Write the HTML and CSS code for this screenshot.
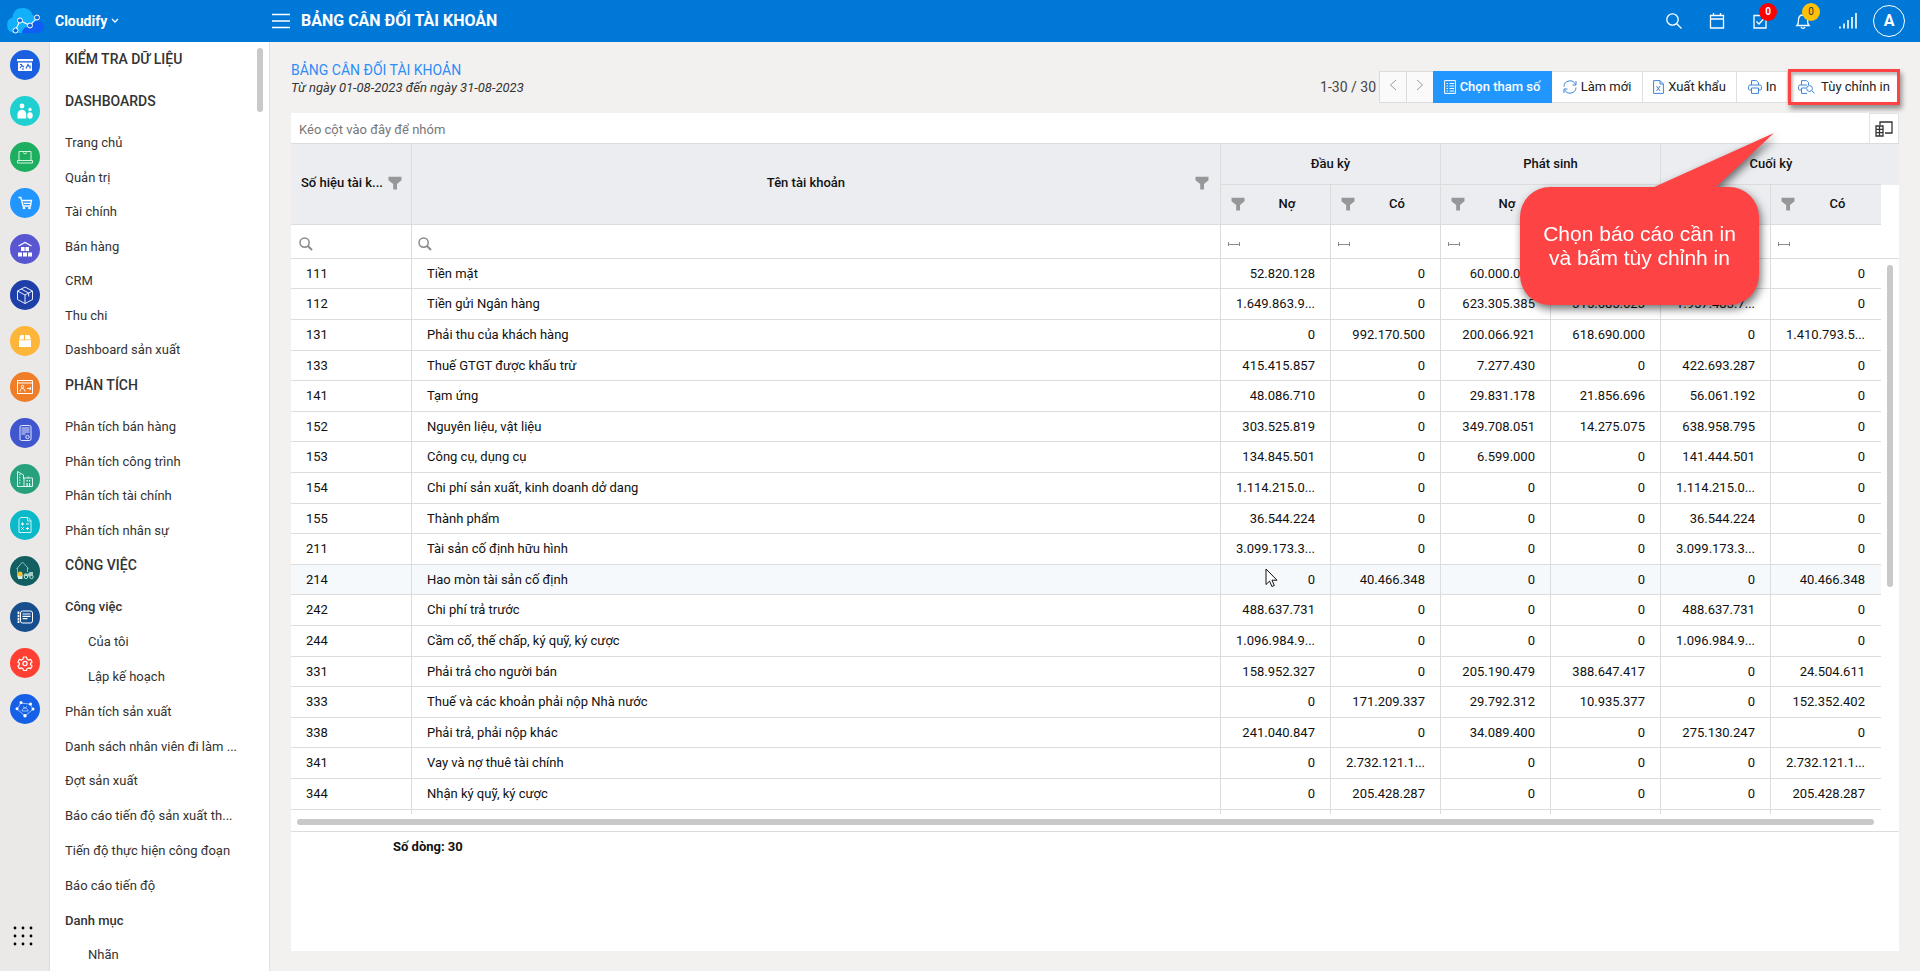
FILE: index.html
```html
<!DOCTYPE html>
<html lang="vi">
<head>
<meta charset="utf-8">
<title>Bảng cân đối tài khoản</title>
<link rel="stylesheet" href="styles.css">
</head>
<body>
<svg class="defs" aria-hidden="true">
  <symbol id="funnel" viewBox="0 0 14 14"><path d="M0.500.8h13v3.400L9 8v5.500H5.200V8L.5 4.200z" fill="currentColor"/></symbol>
  <symbol id="lens" viewBox="0 0 14 14"><circle cx="5.600" cy="5.600" r="4.600" fill="none" stroke="currentColor" stroke-width="1.500"/><path d="M9 9l4 4" stroke="currentColor" stroke-width="2"/></symbol>
  <symbol id="between" viewBox="0 0 14 14"><path d="M1.500 5v4M12.500 5v4M1.500 7.500h11" fill="none" stroke="currentColor" stroke-width="1"/></symbol>
</svg>

<header class="topbar">
  <div class="brand">
    <svg class="logo" width="38" height="28" viewBox="0 0 38 28" aria-hidden="true">
      <path d="M8 26a8 8 0 0 1-1.500-15.500C7 4 11 1 16.500 1c5 0 9 2.500 10 7 3 .5 4.500 3 4.500 6V26z" fill="#12b0fb"/>
      <path d="M16 26c0-3 2-6 6-6 3-1 4-6 9-6 4 0 7 3 7 6s-3 6-7 6z" fill="#0f5df5"/>
      <path d="M9.500 23.500l4.500-10 10 5 7-8" fill="none" stroke="#fff" stroke-width="1.100"/>
      <g fill="#1763d8" stroke="#fff" stroke-width="1"><circle cx="9.500" cy="23.500" r="2.500"/><circle cx="14" cy="13.500" r="2.500"/><circle cx="24" cy="18.500" r="2.500"/><circle cx="31" cy="10.500" r="2.500"/></g>
    </svg>
    <button class="brand-menu" type="button">Cloudify
      <svg width="8" height="6" viewBox="0 0 8 6" aria-hidden="true"><path d="M1 1l3 3 3-3" fill="none" stroke="#fff" stroke-width="1.300"/></svg>
    </button>
  </div>
  <button class="plain" type="button" aria-label="Menu"><svg width="18" height="16" viewBox="0 0 18 16"><path d="M0 1.500h18M0 8h18M0 14.500h18" stroke="#fff" stroke-width="1.400"/></svg></button>
  <h1>BẢNG CÂN ĐỐI TÀI KHOẢN</h1>
  <nav class="actions" aria-label="Công cụ">
    <button class="plain" type="button" aria-label="Tìm kiếm"><svg width="18" height="18" viewBox="0 0 18 18"><circle cx="7.500" cy="7.500" r="5.700"/><path d="M11.700 11.700L16.500 16.500"/></svg></button>
    <button class="plain" type="button" aria-label="Lịch"><svg width="18" height="18" viewBox="0 0 18 18"><path d="M2.500 3.500h13v12.500h-13zM2.500 7h13M5.500 1v3M12.500 1v3"/></svg></button>
    <button class="plain" type="button" aria-label="Công việc"><svg width="18" height="18" viewBox="0 0 18 18"><path d="M3 3.500h12v12.500H3zM5.500 9.500l2.500 2.500 5-5.500"/></svg><span class="badge red">0</span></button>
    <button class="plain" type="button" aria-label="Thông báo"><svg width="18" height="18" viewBox="0 0 18 18"><path d="M3 13.500c1.500-1.500 1.500-3 1.500-5.500 0-3 1.800-5 4.500-5s4.500 2 4.500 5c0 2.500 0 4 1.500 5.500zM7 15c.8 1.700 3.200 1.700 4 0"/></svg><span class="badge amber">0</span></button>
    <button class="plain signal" type="button" aria-label="Tín hiệu"><svg width="20" height="18" viewBox="0 0 20 18"><path d="M2 16.500v-2M6 16.500v-5M10 16.500V8M14 16.500V5M18 16.500V1" stroke-width="1.600"/></svg></button>
    <button class="avatar" type="button">A</button>
  </nav>
</header>

<div class="shell">
  <nav class="rail" aria-label="Phân hệ">
    <a href="#" aria-label="Dashboard"><svg viewBox="0 0 30 30"><circle cx="15" cy="15" r="15" fill="#1a5fe0"/><path d="M7 9h16v2.200H7z" fill="#fff"/><path d="M8 12.500h14V21H8z" fill="#fff"/><path d="M10 18l2-2.500 2 1.500M16 18.500l2-4 1 2M10 14.500h2M20 18.500v-3M12 19h2" fill="none" stroke="#1a5fe0" stroke-width="1.200"/></svg></a>
    <a href="#" aria-label="Nhân sự"><svg viewBox="0 0 30 30"><circle cx="15" cy="15" r="15" fill="#1fd0d0"/><g fill="#fff"><circle cx="12" cy="10" r="2.400"/><path d="M7.500 22.500V18a4.300 4.300 0 0 1 8.700 0v4.500z"/><circle cx="20" cy="13.500" r="1.700"/><ellipse cx="20" cy="19.500" rx="2.700" ry="3.200"/></g></svg></a>
    <a href="#" aria-label="Thiết bị"><svg viewBox="0 0 30 30"><circle cx="15" cy="15" r="15" fill="#1eae60"/><path d="M9 18.500V9.500h12v9M7.500 18.500h15v2.500h-15zM13 10.500l2 1.500 2-1.500" fill="none" stroke="#d4f3e0"/></svg></a>
    <a href="#" aria-label="Bán hàng"><svg viewBox="0 0 30 30"><circle cx="15" cy="15" r="15" fill="#2196ff"/><path d="M8.500 9.500h2.300L13 18h7.500l1-5.500H12M13.500 15.300h7.500" fill="none" stroke="#fff" stroke-width="1.300"/><circle cx="14" cy="20" r="1.300" fill="#fff"/><circle cx="19.500" cy="20" r="1.300" fill="#fff"/></svg></a>
    <a href="#" aria-label="Kho"><svg viewBox="0 0 30 30"><circle cx="15" cy="15" r="15" fill="#5856d0"/><path d="M8.500 12L15 8.500l6.500 3.500" fill="none" stroke="#fff" stroke-width="1.300"/><path d="M11 13h3.600v4H11zM15.400 13H19v4h-3.600zM8 18.500h4v4H8zM13 18.500h4v4h-4zM18 18.500h4v4h-4z" fill="#fff"/></svg></a>
    <a href="#" aria-label="Sản phẩm"><svg viewBox="0 0 30 30"><circle cx="15" cy="15" r="15" fill="#1f3fa8"/><path d="M7.500 11L15 7l7.500 4v8.500L15 23.500l-7.500-4zM7.500 11l7.500 4 7.500-4M15 15v8.500M11.200 9l7.500 4v3.500" fill="none" stroke="#e6ecff"/></svg></a>
    <a href="#" aria-label="Đóng gói"><svg viewBox="0 0 30 30"><circle cx="15" cy="15" r="15" fill="#fdb53a"/><path d="M9 13.500L10.500 9H14v4.500zM21 13.500L19.500 9H15v4.500zM9 14.300h12V21H9z" fill="#fff"/></svg></a>
    <a href="#" aria-label="Khách hàng"><svg viewBox="0 0 30 30"><circle cx="15" cy="15" r="15" fill="#f07d28"/><path d="M7.500 8.500h15v13h-15zM7.500 11h15M10 19.500c0-4 5-4 5 0M17 16.500h4M19.500 15l1.700 1.500-1.700 1.500" fill="none" stroke="#fff"/><circle cx="12.500" cy="14.500" r="1.200" fill="none" stroke="#fff"/></svg></a>
    <a href="#" aria-label="Hợp đồng"><svg viewBox="0 0 30 30"><circle cx="15" cy="15" r="15" fill="#3f56cf"/><rect x="10" y="7.500" width="11" height="15" rx="1.500" fill="none" stroke="#dfe5ff"/><path d="M11.500 10h8M11.500 12h8M11.500 14h8M11.500 16h4" stroke="#dfe5ff"/><circle cx="17.500" cy="19" r="1.700" fill="none" stroke="#dfe5ff"/></svg></a>
    <a href="#" aria-label="Công trình"><svg viewBox="0 0 30 30"><circle cx="15" cy="15" r="15" fill="#27a07d"/><path d="M14 22.500H7.500v-15l6 3.500v4M14 14h8.500v8.500H14zM18.300 14v-1.500" fill="none" stroke="#d9f5ec"/><path d="M9.800 10v11" stroke="#d9f5ec" stroke-dasharray="1.500 1.200"/><path d="M16.500 16h1.200v1.500h-1.200zM19 16h1.200v1.500H19zM16.500 19h1.200v3h-1.200zM19 19h1.200v3H19z" fill="#fff"/></svg></a>
    <a href="#" aria-label="Kế toán"><svg viewBox="0 0 30 30"><circle cx="15" cy="15" r="15" fill="#0cb9c8"/><path d="M10.500 7.500H18l3 3v12H9v-13zM17.500 7.500V11H21" fill="none" stroke="#c8f6fa"/><path d="M11 14h3M12.500 12.500v3M16 14h3M11.300 17.300l2.400 2.400M13.700 17.300l-2.400 2.400M16 18.500h3M17.500 17v3" stroke="#fff"/></svg></a>
    <a href="#" aria-label="Tài sản"><svg viewBox="0 0 30 30"><circle cx="15" cy="15" r="15" fill="#115f61"/><path d="M6.500 13L12.500 6l6 6.500M7.500 12v9h3M17.500 11.500V16" fill="none" stroke="#7cc4bf"/><path d="M13.500 19.500l1-2h4l1-1.500h3.500v4.500h-9.500z" fill="#a7c9c7"/><circle cx="16" cy="21" r="1.700" fill="#115f61" stroke="#cfe" stroke-width=".8"/><circle cx="21.500" cy="21" r="1.700" fill="#115f61" stroke="#cfe" stroke-width=".8"/><path d="M8 18h4.500v5H8z" fill="#dceeee"/><circle cx="10.200" cy="18" r="2.400" fill="#f8bd24"/></svg></a>
    <a href="#" aria-label="Tin tức"><svg viewBox="0 0 30 30"><circle cx="15" cy="15" r="15" fill="#174f8e"/><rect x="10.500" y="9" width="12" height="12" rx="2" fill="none" stroke="#fff"/><path d="M12.500 12h8M12.500 14.300h8M12.500 16.600h5" stroke="#fff" stroke-width="1.200"/><path d="M8.500 9.500v11.500" stroke="#fff" stroke-width="1.800" stroke-dasharray="2.500 .7"/></svg></a>
    <a href="#" aria-label="Cài đặt"><svg viewBox="0 0 30 30"><circle cx="15" cy="15" r="15" fill="#ff3f32"/><path d="M13.500 9h3l.5 2.200 1.500.9 2.100-.7 1.500 2.600-1.600 1.500v1l1.600 1.500-1.500 2.600-2.100-.7-1.500.9-.5 1.700h-3l-.5-1.700-1.500-.9-2.100.7L7.900 18l1.600-1.500v-1L7.900 14l1.500-2.600 2.100.7 1.500-.9z" fill="none" stroke="#fff" stroke-width="1.200" stroke-linejoin="round"/><circle cx="15" cy="15.500" r="2.100" fill="none" stroke="#fff" stroke-width="1.200"/></svg></a>
    <a href="#" aria-label="Kết nối"><svg viewBox="0 0 30 30"><circle cx="15" cy="15" r="15" fill="#1560e6"/><path d="M11 9l9 1.200 3 5L15 22l-8-7zM12 17c0-4 6-4 6 0zM13 12.500l2 1.500 2-1.500" fill="none" stroke="#a9c8ff" stroke-width=".9"/><g fill="#fff"><circle cx="11" cy="8.500" r="1.500"/><circle cx="20.500" cy="10" r="1.600"/><circle cx="7" cy="14.700" r="1.500"/><circle cx="23" cy="15" r="1.500"/><circle cx="15" cy="21.800" r="1.700"/></g></svg></a>
    <button class="apps plain" type="button" aria-label="Ứng dụng"><svg width="20" height="20" viewBox="0 0 20 20"><g fill="#000"><circle cx="2" cy="2" r="1.400"/><circle cx="10" cy="2" r="1.400"/><circle cx="18" cy="2" r="1.400"/><circle cx="2" cy="10" r="1.400"/><circle cx="10" cy="10" r="1.400"/><circle cx="18" cy="10" r="1.400"/><circle cx="2" cy="18" r="1.400"/><circle cx="10" cy="18" r="1.400"/><circle cx="18" cy="18" r="1.400"/></g></svg></button>
  </nav>

  <aside class="sidebar">
    <h2>KIỂM TRA DỮ LIỆU</h2>
    <h2>DASHBOARDS</h2>
    <ul>
      <li><a href="#">Trang chủ</a></li>
      <li><a href="#">Quản trị</a></li>
      <li><a href="#">Tài chính</a></li>
      <li><a href="#">Bán hàng</a></li>
      <li><a href="#">CRM</a></li>
      <li><a href="#">Thu chi</a></li>
      <li><a href="#">Dashboard sản xuất</a></li>
    </ul>
    <h2>PHÂN TÍCH</h2>
    <ul>
      <li><a href="#">Phân tích bán hàng</a></li>
      <li><a href="#">Phân tích công trình</a></li>
      <li><a href="#">Phân tích tài chính</a></li>
      <li><a href="#">Phân tích nhân sự</a></li>
    </ul>
    <h2>CÔNG VIỆC</h2>
    <ul class="tasks">
      <li class="parent"><a href="#">Công việc</a></li>
      <li class="child"><a href="#">Của tôi</a></li>
      <li class="child"><a href="#">Lập kế hoạch</a></li>
      <li><a href="#">Phân tích sản xuất</a></li>
      <li><a href="#">Danh sách nhân viên đi làm ...</a></li>
      <li><a href="#">Đợt sản xuất</a></li>
      <li><a href="#">Báo cáo tiến độ sản xuất th...</a></li>
      <li><a href="#">Tiến độ thực hiện công đoạn</a></li>
      <li><a href="#">Báo cáo tiến độ</a></li>
      <li class="parent"><a href="#">Danh mục</a></li>
      <li class="child"><a href="#">Nhãn</a></li>
    </ul>
    <span class="side-thumb"></span>
  </aside>

  <main>
    <div class="page-head">
      <div>
        <p class="report-title">BẢNG CÂN ĐỐI TÀI KHOẢN</p>
        <p class="report-range">Từ ngày 01-08-2023 đến ngày 31-08-2023</p>
      </div>
      <div class="toolbar">
        <span class="pager">1-30 / 30</span>
        <button class="nav-btn" type="button" aria-label="Trang trước"><svg width="8" height="12" viewBox="0 0 8 12"><path d="M7 1L1.500 6 7 11"/></svg></button>
        <button class="nav-btn" type="button" aria-label="Trang sau"><svg width="8" height="12" viewBox="0 0 8 12"><path d="M1 1l5.500 5L1 11"/></svg></button>
        <button class="btn primary" type="button"><svg width="12" height="14" viewBox="0 0 12 14"><path d="M.6.600h10.800v12.800H.6zM2.500 3.500h1.500M5.500 3.500h4.500M2.500 6h1.500M5.500 6h4.500M2.500 8.500h1.500M5.500 8.500h4.500M2.500 11h1.500M5.500 11h4.500"/></svg>Chọn tham số</button>
        <button class="btn" type="button"><svg width="14" height="14" viewBox="0 0 14 14"><path d="M1 6.500A6 6 0 0 1 12.500 4.500M13 1v4H9.500M13 7.500A6 6 0 0 1 1.500 9.500M1 13V9h3.500"/></svg>Làm mới</button>
        <button class="btn export" type="button"><svg width="11" height="14" viewBox="0 0 11 14"><path d="M.6.600h6.400l3.400 3.400v9.400H.6zM7 .6V4h3.400M3.500 6l3.600 5M7.100 6l-3.600 5"/></svg>Xuất khẩu</button>
        <button class="btn print" type="button"><svg width="14" height="14" viewBox="0 0 14 14"><path d="M3.500 5V.6h5l2 2V5M3.500 10H1.500Q.6 10 .6 9V6.500Q.6 5 2 5h10q1.400 0 1.400 1.500V9q0 1-1 1h-1.900M3.500 8h7v5.400h-7z"/></svg>In</button>
        <button class="btn custom" type="button"><svg width="17" height="14" viewBox="0 0 17 14"><path d="M3.500 5V.6h5l2 2V5M3.500 10H1.500Q.6 10 .6 9V6.500Q.6 5 2 5h7M8 8H3.500v5.400H9"/><circle cx="11.500" cy="8.500" r="2.900"/><path d="M13.700 10.700l2.800 2.700"/></svg>Tùy chỉnh in</button>
      </div>
    </div>

    <section class="panel">
      <div class="group-panel"><span>Kéo cột vào đây để nhóm</span>
        <button class="chooser" type="button" aria-label="Chọn cột"><svg width="18" height="16" viewBox="0 0 18 16"><path d="M5 4V1h12v11h-7M1 5h7v10H1zM1 8.300h7M1 11.700h7M4.500 5v10" fill="none" stroke="#333" stroke-width="1.300"/></svg></button>
      </div>
      <div class="grid">
        <table>
          <colgroup><col class="c-code"><col><col class="c-num"><col class="c-num"><col class="c-num"><col class="c-num"><col class="c-num"><col class="c-num"><col class="c-end"></colgroup>
          <thead>
            <tr class="groups">
              <th rowspan="2"><div class="head-cell"><span>Số hiệu tài k...</span><svg><use href="#funnel"/></svg></div></th>
              <th rowspan="2"><div class="head-cell"><span>Tên tài khoản</span><svg><use href="#funnel"/></svg></div></th>
              <th colspan="2">Đầu kỳ</th><th colspan="2">Phát sinh</th><th colspan="2" class="last">Cuối kỳ</th><th class="last"></th>
            </tr>
            <tr class="subs">
              <th><div class="head-cell num"><svg><use href="#funnel"/></svg><span>Nợ</span></div></th>
              <th><div class="head-cell num"><svg><use href="#funnel"/></svg><span>Có</span></div></th>
              <th><div class="head-cell num"><svg><use href="#funnel"/></svg><span>Nợ</span></div></th>
              <th><div class="head-cell num"><svg><use href="#funnel"/></svg><span>Có</span></div></th>
              <th><div class="head-cell num"><svg><use href="#funnel"/></svg><span>Nợ</span></div></th>
              <th class="last"><div class="head-cell num"><svg><use href="#funnel"/></svg><span>Có</span></div></th>
              <th class="blank"></th>
            </tr>
            <tr class="filters">
              <td><svg><use href="#lens"/></svg></td><td><svg><use href="#lens"/></svg></td>
              <td><svg><use href="#between"/></svg></td><td><svg><use href="#between"/></svg></td><td><svg><use href="#between"/></svg></td><td><svg><use href="#between"/></svg></td><td><svg><use href="#between"/></svg></td><td><svg><use href="#between"/></svg></td><td></td>
            </tr>
          </thead>
          <tbody>
            <tr><td>111</td><td>Tiền mặt</td><td>52.820.128</td><td>0</td><td>60.000.000</td><td>0</td><td>112.820.128</td><td>0</td><td></td></tr>
            <tr><td>112</td><td>Tiền gửi Ngân hàng</td><td>1.649.863.9...</td><td>0</td><td>623.305.385</td><td>315.685.623</td><td>1.957.483.7...</td><td>0</td><td></td></tr>
            <tr><td>131</td><td>Phải thu của khách hàng</td><td>0</td><td>992.170.500</td><td>200.066.921</td><td>618.690.000</td><td>0</td><td>1.410.793.5...</td><td></td></tr>
            <tr><td>133</td><td>Thuế GTGT được khấu trừ</td><td>415.415.857</td><td>0</td><td>7.277.430</td><td>0</td><td>422.693.287</td><td>0</td><td></td></tr>
            <tr><td>141</td><td>Tạm ứng</td><td>48.086.710</td><td>0</td><td>29.831.178</td><td>21.856.696</td><td>56.061.192</td><td>0</td><td></td></tr>
            <tr><td>152</td><td>Nguyên liệu, vật liệu</td><td>303.525.819</td><td>0</td><td>349.708.051</td><td>14.275.075</td><td>638.958.795</td><td>0</td><td></td></tr>
            <tr><td>153</td><td>Công cụ, dụng cụ</td><td>134.845.501</td><td>0</td><td>6.599.000</td><td>0</td><td>141.444.501</td><td>0</td><td></td></tr>
            <tr><td>154</td><td>Chi phí sản xuất, kinh doanh dở dang</td><td>1.114.215.0...</td><td>0</td><td>0</td><td>0</td><td>1.114.215.0...</td><td>0</td><td></td></tr>
            <tr><td>155</td><td>Thành phẩm</td><td>36.544.224</td><td>0</td><td>0</td><td>0</td><td>36.544.224</td><td>0</td><td></td></tr>
            <tr><td>211</td><td>Tài sản cố định hữu hình</td><td>3.099.173.3...</td><td>0</td><td>0</td><td>0</td><td>3.099.173.3...</td><td>0</td><td></td></tr>
            <tr class="hover"><td>214</td><td>Hao mòn tài sản cố định</td><td>0<svg class="pointer" viewBox="0 0 13 20" aria-hidden="true"><path d="M1 1v15.500l3.600-3.400 2.300 5.400 2.400-1-2.300-5.300H12z" fill="#fff" stroke="#111"/></svg></td><td>40.466.348</td><td>0</td><td>0</td><td>0</td><td>40.466.348</td><td></td></tr>
            <tr><td>242</td><td>Chi phí trả trước</td><td>488.637.731</td><td>0</td><td>0</td><td>0</td><td>488.637.731</td><td>0</td><td></td></tr>
            <tr><td>244</td><td>Cầm cố, thế chấp, ký quỹ, ký cược</td><td>1.096.984.9...</td><td>0</td><td>0</td><td>0</td><td>1.096.984.9...</td><td>0</td><td></td></tr>
            <tr><td>331</td><td>Phải trả cho người bán</td><td>158.952.327</td><td>0</td><td>205.190.479</td><td>388.647.417</td><td>0</td><td>24.504.611</td><td></td></tr>
            <tr><td>333</td><td>Thuế và các khoản phải nộp Nhà nước</td><td>0</td><td>171.209.337</td><td>29.792.312</td><td>10.935.377</td><td>0</td><td>152.352.402</td><td></td></tr>
            <tr><td>338</td><td>Phải trả, phải nộp khác</td><td>241.040.847</td><td>0</td><td>34.089.400</td><td>0</td><td>275.130.247</td><td>0</td><td></td></tr>
            <tr><td>341</td><td>Vay và nợ thuê tài chính</td><td>0</td><td>2.732.121.1...</td><td>0</td><td>0</td><td>0</td><td>2.732.121.1...</td><td></td></tr>
            <tr><td>344</td><td>Nhận ký quỹ, ký cược</td><td>0</td><td>205.428.287</td><td>0</td><td>0</td><td>0</td><td>205.428.287</td><td></td></tr>
          </tbody>
          <tfoot><tr class="peek" aria-hidden="true"><td></td><td></td><td></td><td></td><td></td><td></td><td></td><td></td><td></td></tr></tfoot>
        </table>
        <span class="v-thumb"></span>
      </div>
      <div class="h-scroll"><span></span></div>
      <div class="summary">Số dòng: 30</div>
    </section>

    <div class="callout">
      <svg class="tail" width="124" height="56" viewBox="0 0 124 56" aria-hidden="true"><path d="M122 1L0 56h63z" fill="#fd4344"/></svg>
      <p>Chọn báo cáo cần in<br>và bấm tùy chỉnh in</p>
    </div>
  </main>
</div>
</body>
</html>
```
FILE: styles.css
```css
* { box-sizing: border-box; }
html, body { height: 100%; }
body {
  margin: 0;
  display: flex;
  flex-direction: column;
  overflow: hidden;
  background: #f3f1f0;
  color: #333;
  font: 13px/18px Roboto, sans-serif;
}
button { font: inherit; color: inherit; border: 0; padding: 0; background: none; }
a { color: inherit; text-decoration: none; }
h1, h2, p, ul { margin: 0; padding: 0; }
.defs { position: absolute; width: 0; height: 0; }
.plain { display: flex; position: relative; }

/* Top bar */
.topbar {
  display: flex;
  flex: none;
  align-items: center;
  height: 42px;
  padding-right: 15px;
  background: #0078d7;
  color: #fff;
}
.brand { display: flex; align-items: center; width: 272px; padding-left: 6px; gap: 11px; }
.brand-menu { display: flex; align-items: center; gap: 4px; font-size: 14px; font-weight: 700; }
.topbar h1 { margin-left: 11px; font-size: 16px; line-height: 24px; font-weight: 700; }
.actions { display: flex; align-items: center; margin-left: auto; gap: 25px; }
.actions svg { fill: none; stroke: #fff; stroke-width: 1.3; }
.signal { margin-left: 1px; }
.avatar {
  width: 32px;
  height: 32px;
  margin-left: -10px;
  border: 1px solid #fff;
  border-radius: 50%;
  font-size: 16px;
  font-weight: 700;
}
.badge {
  position: absolute;
  top: -9px;
  left: 8px;
  width: 18px;
  height: 18px;
  border-radius: 50%;
  font-size: 10px;
  line-height: 18px;
  text-align: center;
}
.red { background: #f00; font-weight: 700; }
.amber { background: #ffc107; color: #333; }

.shell { display: flex; flex: 1; min-height: 0; }

/* Module rail */
.rail {
  display: flex;
  flex: none;
  flex-direction: column;
  align-items: center;
  gap: 16px;
  width: 50px;
  padding: 8px 0 25px;
  background: #ebe9e8;
  border-right: 1px solid #dddcdb;
}
.rail a, .rail a svg { display: block; width: 30px; height: 30px; }
.apps { margin: auto 3px 0 0; }

/* Sidebar */
.sidebar {
  position: relative;
  flex: none;
  width: 220px;
  overflow: hidden;
  background: #fff;
  border-right: 1px solid #e3e1e0;
}
.sidebar h2 {
  height: 42px;
  padding-left: 15px;
  font-size: 14px;
  line-height: 34px;
  font-weight: 500;
}
.sidebar ul { list-style: none; }
.sidebar li { height: 35px; padding-left: 15px; line-height: 34px; white-space: nowrap; }
.sidebar li:nth-child(even) { height: 34px; }
.sidebar .tasks li { height: 35px; }
.sidebar .tasks li:nth-child(5n) { height: 34px; }
.sidebar .parent { font-weight: 500; }
.sidebar .child { padding-left: 38px; }
.side-thumb {
  position: absolute;
  top: 6px;
  right: 6px;
  width: 6px;
  height: 64px;
  border-radius: 3px;
  background: #c9c9c9;
}

/* Page */
main {
  position: relative;
  display: flex;
  flex: 1;
  flex-direction: column;
  min-width: 0;
  padding: 19px 21px 20px;
}
.page-head { display: flex; justify-content: space-between; height: 52px; }
.report-title { color: #2e8df7; font-size: 14px; }
.report-range { font-style: italic; }

.toolbar { display: flex; align-items: center; height: 32px; margin-top: 10px; color: #222; }
.pager { margin-right: 3px; font-size: 14px; color: #444; }
.toolbar svg { fill: none; stroke: #3f86d9; }
.nav-btn {
  width: 27px;
  height: 32px;
  border: 1px solid #dcdcdc;
  border-right: 0;
  background: #fafafa;
}
.toolbar .nav-btn svg { stroke: #999; }
.btn {
  display: flex;
  align-items: center;
  justify-content: center;
  gap: 4px;
  width: 91px;
  height: 32px;
  border: 1px solid #dde0e0;
  border-left: 0;
  background: #fff;
}
.btn.primary { width: 119px; background: #2196ff; border-color: #2196ff; color: #fff; font-weight: 500; }
.btn.primary svg { stroke: #fff; }
.btn.export { width: 94px; }
.btn.print { width: 51px; }
.btn.custom {
  gap: 6px;
  width: 112px;
  height: 36px;
  margin-right: -1px;
  border: 3px solid #fd4344;
  box-shadow: 2px 4px 5px rgba(0, 0, 0, .4), inset 2px 3px 3px rgba(0, 0, 0, .25);
}

.panel { display: flex; flex: 1; flex-direction: column; min-height: 0; background: #fff; }
.group-panel {
  display: flex;
  align-items: center;
  justify-content: space-between;
  height: 31px;
  padding-left: 8px;
  border-bottom: 1px solid #dcdcdc;
  color: #777;
}
.group-panel span { padding-top: 3px; }
.chooser {
  display: flex;
  align-items: center;
  justify-content: center;
  width: 30px;
  height: 30px;
  border: 1px solid #e2e2e2;
  border-bottom: 0;
}

/* Grid */
.grid { position: relative; }
table { width: 100%; table-layout: fixed; border-collapse: separate; border-spacing: 0; color: #111; }
.c-code { width: 121px; }
.c-num { width: 110px; }
.c-end { width: 18px; }
th, td { padding: 0; border: 0 solid #dcdcdc; border-width: 0 1px 1px 0; }
th { background: #ebedf1; font-weight: 500; }
.groups { height: 41px; }
.subs { height: 40px; }
.filters { height: 34px; }
th.last { border-right: 0; }
.groups th.last:last-child, th.blank { border: 0; }
th.blank { background: #fff; }
.head-cell { display: flex; align-items: center; padding: 0 11px 2px 10px; gap: 5px; }
.head-cell span { flex: 1; white-space: nowrap; }
.head-cell svg { flex: none; width: 14px; height: 14px; color: #959799; }
.head-cell.num { padding-right: 6px; }
.filters td { padding-left: 8px; }
.filters td:nth-child(n+2) { padding-left: 6px; }
.filters svg { display: block; width: 14px; height: 14px; margin-top: 4px; color: #8a8a8a; }
.filters td:nth-child(n+8) { border-right: 0; }

tbody tr { height: 31px; }
tbody tr:nth-child(5n+1), tbody tr:nth-child(5n+4) { height: 30px; }
tbody td { padding: 0 15px; line-height: 16px; white-space: nowrap; }
tbody td:nth-child(n+3) { position: relative; text-align: right; }
tbody td:nth-child(8) { padding-right: 16px; border-right: 0; }
tbody td:last-child, .peek td:last-child { padding: 0; border: 0; }
.hover td:not(:last-child) { background: #f5f9fc; }
.pointer { position: absolute; top: 3px; left: 44px; width: 13px; height: 20px; }
.peek { height: 4px; }
.peek td { border-bottom: 0; }
.peek td:nth-child(8) { border-right: 0; }
.v-thumb {
  position: absolute;
  top: 121px;
  right: 6px;
  width: 6px;
  height: 322px;
  border-radius: 3px;
  background: #c9c9c9;
}
.h-scroll { padding: 5px 25px 6px 6px; border-bottom: 1px solid #dcdcdc; }
.h-scroll span { display: block; height: 6px; border-radius: 3px; background: #c9c9c9; }
.summary { padding: 6px 0 0 102px; color: #111; font-weight: 700; }

/* Annotation balloon over the grid */
.callout {
  position: absolute;
  top: 145px;
  right: 161px;
  display: flex;
  align-items: center;
  justify-content: center;
  width: 239px;
  height: 118px;
  border-radius: 30px;
  background: #fd4344;
  color: #fff;
  font: 21px/24px "Liberation Sans", sans-serif;
  text-align: center;
  filter: drop-shadow(2px 4px 4px rgba(0, 0, 0, .55));
}
.tail { position: absolute; top: -55px; right: -17px; }
```
